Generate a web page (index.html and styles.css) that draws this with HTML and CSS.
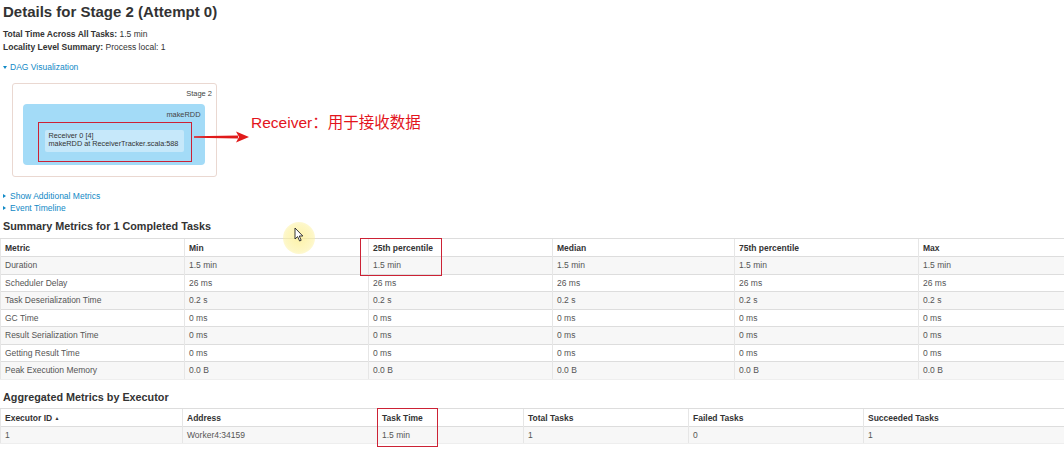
FILE: index.html
```html
<!DOCTYPE html>
<html>
<head>
<meta charset="utf-8">
<title>Details for Stage 2</title>
<link rel="stylesheet" href="styles.css">
</head>
<body>
<div class="page">
  <h3 class="title">Details for Stage 2 (Attempt 0)</h3>
  <ul class="summary">
    <li><strong>Total Time Across All Tasks:</strong> 1.5 min</li>
    <li><strong>Locality Level Summary:</strong> Process local: 1</li>
  </ul>
  <div class="toggle first"><span class="arrow-open"></span><a>DAG Visualization</a></div>

  <div class="dag">
    <div class="stage">
      <div class="stage-label">Stage 2</div>
      <div class="cluster">
        <div class="cluster-label">makeRDD</div>
        <div class="node">Receiver 0 [4]<br>makeRDD at ReceiverTracker.scala:588</div>
      </div>
    </div>
  </div>

  <div class="toggles">
    <div class="toggle"><span class="arrow-closed"></span><a>Show Additional Metrics</a></div>
    <div class="toggle"><span class="arrow-closed"></span><a>Event Timeline</a></div>
  </div>

  <h4 class="section">Summary Metrics for 1 Completed Tasks</h4>
  <table class="grid metrics">
    <colgroup>
      <col class="c184"><col class="c184"><col class="c184"><col class="c182"><col class="c184"><col>
    </colgroup>
    <thead>
      <tr><th>Metric</th><th>Min</th><th>25th percentile</th><th>Median</th><th>75th percentile</th><th>Max</th></tr>
    </thead>
    <tbody>
      <tr><td>Duration</td><td>1.5 min</td><td>1.5 min</td><td>1.5 min</td><td>1.5 min</td><td>1.5 min</td></tr>
      <tr><td>Scheduler Delay</td><td>26 ms</td><td>26 ms</td><td>26 ms</td><td>26 ms</td><td>26 ms</td></tr>
      <tr><td>Task Deserialization Time</td><td>0.2 s</td><td>0.2 s</td><td>0.2 s</td><td>0.2 s</td><td>0.2 s</td></tr>
      <tr><td>GC Time</td><td>0 ms</td><td>0 ms</td><td>0 ms</td><td>0 ms</td><td>0 ms</td></tr>
      <tr><td>Result Serialization Time</td><td>0 ms</td><td>0 ms</td><td>0 ms</td><td>0 ms</td><td>0 ms</td></tr>
      <tr><td>Getting Result Time</td><td>0 ms</td><td>0 ms</td><td>0 ms</td><td>0 ms</td><td>0 ms</td></tr>
      <tr><td>Peak Execution Memory</td><td>0.0 B</td><td>0.0 B</td><td>0.0 B</td><td>0.0 B</td><td>0.0 B</td></tr>
    </tbody>
  </table>

  <h4 class="section second">Aggregated Metrics by Executor</h4>
  <table class="grid executors">
    <colgroup>
      <col class="e1"><col class="e2"><col class="e3"><col class="e4"><col class="e5"><col>
    </colgroup>
    <thead>
      <tr><th>Executor ID <span class="sort">&#9650;</span></th><th>Address</th><th>Task Time</th><th>Total Tasks</th><th>Failed Tasks</th><th>Succeeded Tasks</th></tr>
    </thead>
    <tbody>
      <tr><td>1</td><td>Worker4:34159</td><td>1.5 min</td><td>1</td><td>0</td><td>1</td></tr>
    </tbody>
  </table>

  <!-- annotation overlays -->
  <div class="mark mark-node"></div>
  <svg class="mark-arrow" width="60" height="14" viewBox="0 0 60 14">
    <path d="M2 6.2 L46 5.6 L46 8.4 L2 7.8 Z" fill="#e01a1a"/>
    <path d="M44 1.5 L57 7 L44 12.5 L47 7 Z" fill="#e01a1a"/>
  </svg>
  <div class="mark-text">Receiver：用于接收数据</div>
  <div class="mark mark-pct"></div>
  <div class="mark mark-time"></div>

  <div class="pointer-halo"></div>
  <svg class="pointer" width="10" height="15" viewBox="0 0 10 15">
    <path d="M1 1 L1 12 L3.6 9.6 L5.6 14 L7.2 13.3 L5.3 9 L8.8 9 Z" fill="#fff" stroke="#222" stroke-width="0.9" stroke-linejoin="round"/>
  </svg>
</div>
</body>
</html>
```

FILE: styles.css
```css
html, body {
  margin: 0;
  padding: 0;
  background: #fff;
  overflow: hidden;
}

body {
  font-family: "Liberation Sans", Arial, sans-serif;
  color: #333;
  font-size: 8.5px;
}

.page {
  position: relative;
  width: 1064px;
  height: 455px;
}

.title {
  margin: 0;
  padding: 3px 3px 0;
  font-size: 15px;
  line-height: 18px;
  font-weight: bold;
  color: #333;
}

.summary {
  list-style: none;
  margin: 7px 0 0;
  padding: 0 3px;
  line-height: 13px;
}

.summary strong {
  color: #333;
}

.toggle {
  padding-left: 3px;
  line-height: 12px;
  display: flex;
  align-items: center;
}

.toggle a {
  color: #1089c6;
}

.toggle.first {
  margin-top: 7px;
}

.arrow-open {
  width: 0;
  height: 0;
  border-left: 2.5px solid transparent;
  border-right: 2.5px solid transparent;
  border-top: 3px solid #1089c6;
  margin-right: 3px;
}

.arrow-closed {
  width: 0;
  height: 0;
  border-top: 2.5px solid transparent;
  border-bottom: 2.5px solid transparent;
  border-left: 3px solid #1089c6;
  margin-right: 4px;
}

.dag {
  margin-top: 10px;
  padding-left: 12px;
}

.stage {
  width: 205px;
  height: 94px;
  box-sizing: border-box;
  border: 1px solid #ead8d1;
  border-radius: 3px;
  padding: 5px 4px 0 10px;
  background: #fff;
}

.stage-label {
  text-align: right;
  font-size: 7.5px;
  line-height: 9px;
  color: #444;
}

.cluster {
  margin-top: 6px;
  width: 182px;
  height: 61px;
  box-sizing: border-box;
  background: #a3dbf7;
  border-radius: 4px;
  padding: 5.5px 4.5px 0 21.5px;
}

.cluster-label {
  text-align: right;
  font-size: 7.4px;
  line-height: 9px;
  color: #444;
}

.node {
  margin-top: 11.5px;
  width: 139px;
  height: 22px;
  box-sizing: border-box;
  background: #c6e8fa;
  border-radius: 2px;
  padding: 2px 0 0 4px;
  font-size: 7.3px;
  line-height: 7.7px;
  color: #333;
  white-space: nowrap;
}

.toggles {
  margin-top: 12.5px;
}

.section {
  margin: 6.4px 0 0;
  padding-left: 3px;
  font-size: 10.8px;
  line-height: 13px;
  font-weight: bold;
  color: #333;
}

.section.second {
  margin-top: 11.3px;
}

.grid {
  margin-top: 5.2px;
  width: 1064px;
  table-layout: fixed;
  border-collapse: collapse;
  font-size: 8.5px;
}

.grid.executors {
  margin-top: 4.4px;
}

.c184 { width: 184px; }
.c182 { width: 182px; }

.e1 { width: 182px; }
.e2 { width: 195px; }
.e3 { width: 146px; }
.e4 { width: 165px; }
.e5 { width: 175px; }

.grid th,
.grid td {
  text-align: left;
  padding: 0 4px;
  border-top: 1px solid #dddddd;
  border-left: 1px solid #e6e6e6;
  white-space: nowrap;
  overflow: hidden;
}

.grid th {
  height: 17px;
  font-weight: bold;
  color: #333;
}

.grid td {
  height: 16.5px;
  color: #555;
}

.grid.executors th {
  height: 16.5px;
}

.grid tbody tr:nth-child(odd) td {
  background: #f7f7f7;
}

.grid tbody tr:last-child td {
  border-bottom: 1px solid #eeeeee;
}

.sort {
  font-size: 5px;
  vertical-align: 1px;
}

/* annotations drawn over the screenshot */
.mark {
  position: absolute;
  border: 1.5px solid #cc2235;
  box-sizing: border-box;
}

.mark-node {
  left: 38px;
  top: 122px;
  width: 154px;
  height: 40px;
}

.mark-pct {
  left: 360px;
  top: 238px;
  width: 82px;
  height: 38px;
}

.mark-time {
  left: 377px;
  top: 408px;
  width: 61px;
  height: 39px;
}

.mark-arrow {
  position: absolute;
  left: 192px;
  top: 130px;
}

.mark-text {
  position: absolute;
  left: 251px;
  top: 114px;
  font-family: "Liberation Sans", "Noto Sans CJK SC", sans-serif;
  font-size: 15.5px;
  line-height: 18px;
  color: #e3141c;
  white-space: nowrap;
}

.pointer-halo {
  position: absolute;
  left: 283px;
  top: 222px;
  width: 32px;
  height: 32px;
  border-radius: 50%;
  background: radial-gradient(circle, rgba(252, 238, 140, 0.75) 0%, rgba(252, 240, 150, 0.55) 60%, rgba(255, 245, 180, 0.15) 100%);
}

.pointer {
  position: absolute;
  left: 294px;
  top: 227px;
}
```
